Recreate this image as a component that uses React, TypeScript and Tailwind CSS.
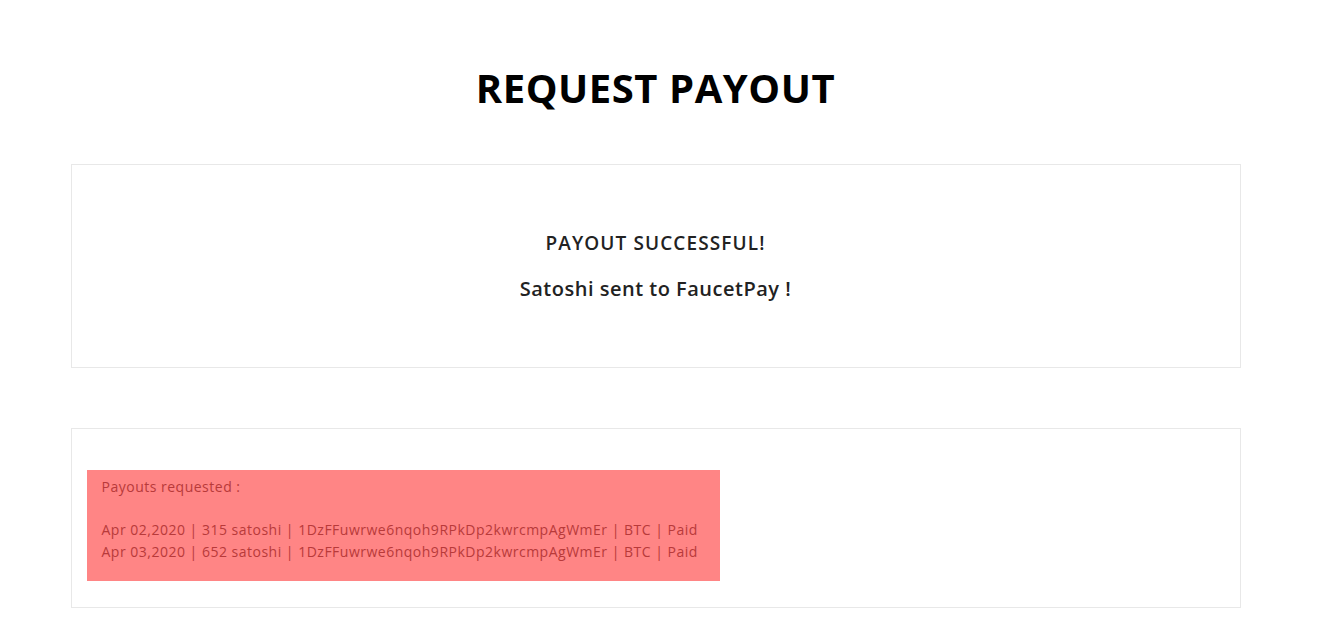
const rows = [
  "Apr 02,2020 | 315 satoshi | 1DzFFuwrwe6nqoh9RPkDp2kwrcmpAgWmEr | BTC | Paid",
  "Apr 03,2020 | 652 satoshi | 1DzFFuwrwe6nqoh9RPkDp2kwrcmpAgWmEr | BTC | Paid",
];

export default function App() {
  return (
    <div className="min-h-screen bg-white w-[1311px] font-['Open_Sans',sans-serif]">
      <div className="w-[1170px] mx-auto">
        <h1 className="pt-[64px] text-center text-[40px] leading-[48px] font-bold text-black tracking-[0.55px]">
          REQUEST PAYOUT
        </h1>

        {/* result box */}
        <div className="mt-[52px] h-[204px] border border-[#e8e8e8] flex flex-col items-center pt-[65px] text-[#222]">
          <p className="text-[19px] leading-[26px] font-semibold tracking-[1.1px]">PAYOUT SUCCESSFUL!</p>
          <p className="mt-[20px] text-[20px] leading-[26px] font-semibold tracking-[0.5px]">
            Satoshi sent to FaucetPay !
          </p>
        </div>

        {/* history box */}
        <div className="mt-[60px] border border-[#e8e8e8] pt-[41px] pb-[26px] pl-[15px]">
          <div className="inline-block bg-[#ff8585] text-[#b83a3a] text-[14px] leading-[21.5px] tracking-[0.5px] pl-[15px] pr-[22px] pt-[6px] pb-[19px]">
            <div>Payouts requested :</div>
            <div className="h-[21.5px]" />
            {rows.map((r) => (
              <div key={r}>{r}</div>
            ))}
          </div>
        </div>
      </div>
    </div>
  );
}
